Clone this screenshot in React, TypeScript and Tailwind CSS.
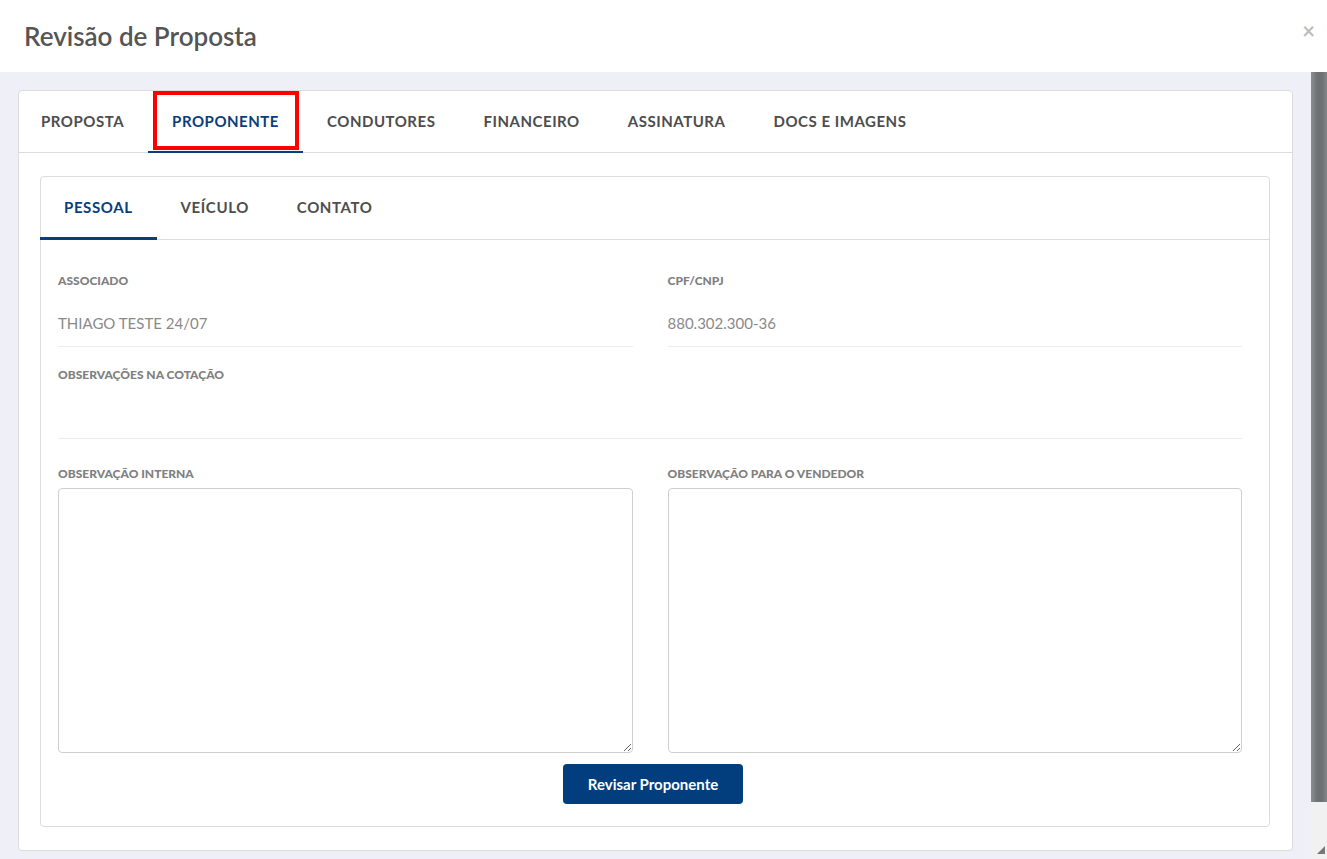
import { useState } from "react";

const mainTabs = ["PROPOSTA", "PROPONENTE", "CONDUTORES", "FINANCEIRO", "ASSINATURA", "DOCS E IMAGENS"];
const subTabs = ["PESSOAL", "VEÍCULO", "CONTATO"];

function Label({ children, className = "" }: { children: React.ReactNode; className?: string }) {
  return <div className={`text-[12px] leading-4 font-black text-[#808080] ${className}`}>{children}</div>;
}

export default function App() {
  const [tab, setTab] = useState("PROPONENTE");
  const [subTab, setSubTab] = useState("PESSOAL");

  return (
    <div className="flex h-[859px] w-[1327px] flex-col overflow-hidden font-['Lato',sans-serif]">
      <header className="relative flex h-[72px] shrink-0 items-center bg-white px-6">
        <h1 className="text-[26px] font-semibold text-[#555]">Revisão de Proposta</h1>
        <button className="absolute right-[12px] top-[19px] text-[22px] font-bold leading-6 text-[#bdbdbd]">×</button>
      </header>

      <div className="flex min-h-0 flex-1 bg-[#efeff8]">
        <div className="flex-1 px-[18px] pt-[18px]">
          <div className="rounded-[4px] border border-[#dcdcdc] bg-white">
            <nav className="flex h-[62px] border-b border-[#dcdcdc]">
              {mainTabs.map((t, i) => (
                <button
                  key={t}
                  onClick={() => setTab(t)}
                  className={`relative flex items-center px-[24px] text-[15px] font-bold tracking-[0.035em] ${
                    i === 0 ? "-ml-[2px]" : ""
                  } ${tab === t ? "-mb-px border-b-2 border-[#0a3d7e] text-[#0a3d7e]" : "text-[#4d4d4d]"}`}
                >
                  {t}
                  {t === "PROPONENTE" && (
                    <span className="pointer-events-none absolute bottom-[1px] left-[5px] right-[4px] top-0 border-4 border-[#ff0000]" />
                  )}
                </button>
              ))}
            </nav>

            <div className="pb-[23px] pl-[21px] pr-[22px] pt-[23px]">
              <div className="rounded-[4px] border border-[#dcdcdc]">
                <nav className="flex h-[63px] border-b border-[#dcdcdc]">
                  {subTabs.map((t, i) => (
                    <button
                      key={t}
                      onClick={() => setSubTab(t)}
                      className={`flex items-center px-[24px] text-[15px] font-bold tracking-[0.04em] ${
                        i === 0 ? "-ml-px" : ""
                      } ${subTab === t ? "-mb-px border-b-[3px] border-[#0a3d7e] text-[#0a3d7e]" : "pb-[2px] text-[#4d4d4d]"}`}
                    >
                      {t}
                    </button>
                  ))}
                </nav>

                <div className="pb-[22px] pl-[17px] pr-[27px] pt-[33px]">
                  <div className="grid grid-cols-2 gap-x-[35px]">
                    <div>
                      <Label className="mb-3">ASSOCIADO</Label>
                      <div className="flex h-[46px] items-center border-b border-[#ececec] text-[15px] text-[#8a8a8a]">
                        THIAGO TESTE 24/07
                      </div>
                    </div>
                    <div>
                      <Label className="mb-3">CPF/CNPJ</Label>
                      <div className="flex h-[46px] items-center border-b border-[#ececec] text-[15px] text-[#8a8a8a]">
                        880.302.300-36
                      </div>
                    </div>
                  </div>

                  <Label className="mb-3 mt-[20px]">OBSERVAÇÕES NA COTAÇÃO</Label>
                  <div className="h-[44px] border-b border-[#ececec]" />

                  <div className="mt-[27px] grid grid-cols-2 gap-x-[35px]">
                    <div>
                      <Label className="mb-[6px]">OBSERVAÇÃO INTERNA</Label>
                      <textarea className="block h-[265px] w-full resize rounded-[4px] border border-[#cfcfcf] p-2 text-[15px] outline-none" />
                    </div>
                    <div>
                      <Label className="mb-[6px]">OBSERVAÇÃO PARA O VENDEDOR</Label>
                      <textarea className="block h-[265px] w-full resize rounded-[4px] border border-[#cfcfcf] p-2 text-[15px] outline-none" />
                    </div>
                  </div>

                  <div className="mt-[11px] flex justify-center">
                    <button className="ml-[6px] h-[40px] w-[180px] rounded-[4px] bg-[#023e7d] text-[15px] font-bold text-white">
                      Revisar Proponente
                    </button>
                  </div>
                </div>
              </div>
            </div>
          </div>
        </div>

        <div className="flex w-4 shrink-0 flex-col bg-[#f1f1f1]">
          <div className="h-[730px] bg-[linear-gradient(to_right,#8d9093,#6d7174_40%,#6d7174_70%,#85888b)]" />
          <div className="flex-1" />
          <div className="mb-[5px] ml-auto mr-[2px] h-0 w-0 border-b-[8px] border-l-[8px] border-b-[#777] border-l-transparent" />
        </div>
      </div>
    </div>
  );
}
